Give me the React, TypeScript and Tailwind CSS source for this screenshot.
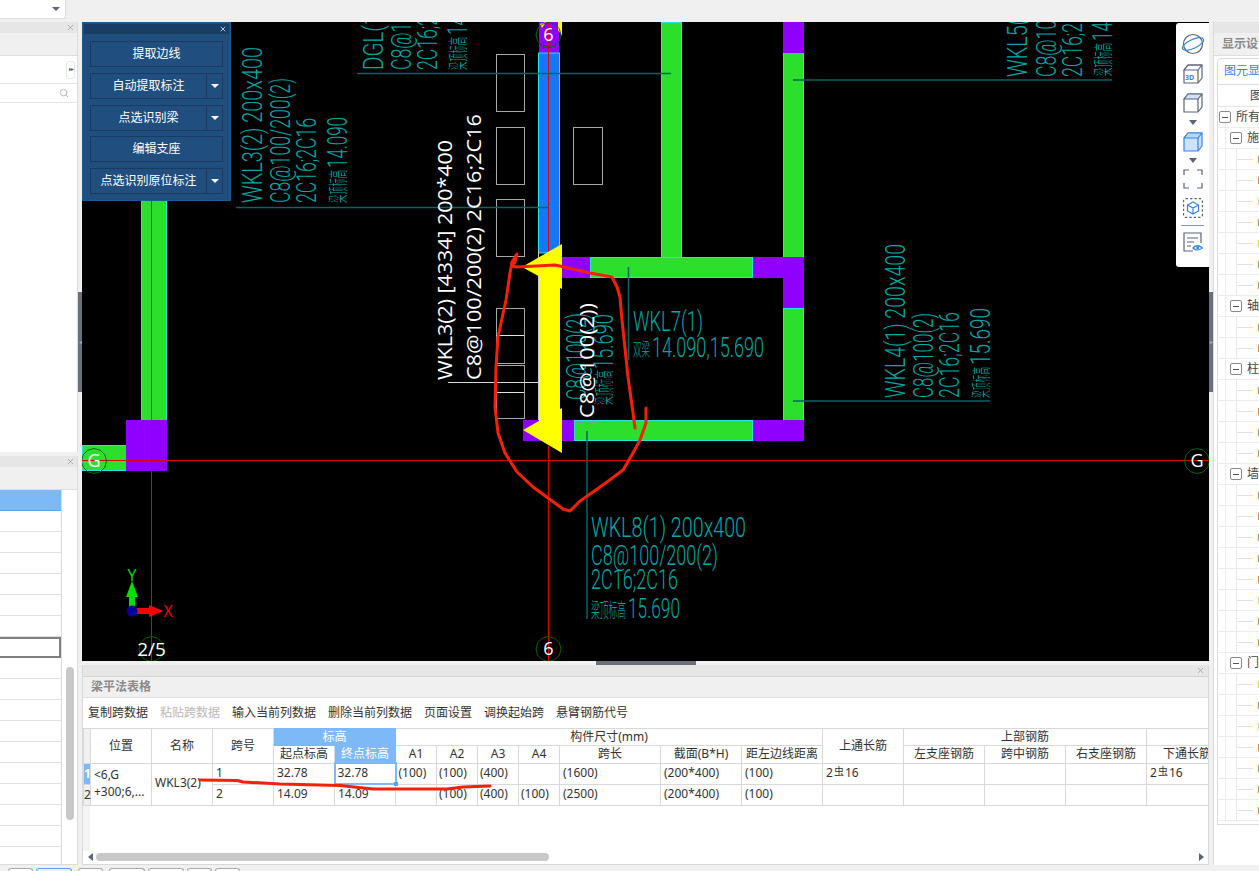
import { ReactNode } from "react";
import { X, Search } from "lucide-react";

const UI_FONT = '"Noto Sans", "Noto Sans CJK SC", sans-serif';
const CAD_FONT = 'Roboto, "Noto Sans CJK SC", sans-serif';
const LABEL_FONT = '"Open Sans", "Noto Sans CJK SC", sans-serif';
const TEAL = "#00a8a8";
const LEADER = "#046464";

function VText({ x, y, len, size = 28, fill = TEAL, children }: { x: number; y: number; len: number; size?: number; fill?: string; children: string }) {
  const label = fill !== TEAL;
  return (
    <text
      transform={`translate(${x},${y}) rotate(-90)`}
      fontSize={size}
      fontWeight={label ? 400 : 300}
      fill={fill}
      textLength={len}
      lengthAdjust="spacingAndGlyphs"
      fontFamily={label ? LABEL_FONT : CAD_FONT}
    >
      {children}
    </text>
  );
}

function HText({ x, y, len, size = 28, fill = TEAL, children }: { x: number; y: number; len: number; size?: number; fill?: string; children: string }) {
  return (
    <text x={x} y={y} fontSize={size} fontWeight={300} fill={fill} textLength={len} lengthAdjust="spacingAndGlyphs" fontFamily={CAD_FONT}>
      {children}
    </text>
  );
}

function Bubble({ x, y, label, size = 18 }: { x: number; y: number; label: string; size?: number }) {
  const points = Array.from({ length: 12 }, (_, i) => {
    const a = (i * Math.PI) / 6;
    return `${x + 12.5 * Math.cos(a)},${y + 12.5 * Math.sin(a)}`;
  }).join(" ");
  return (
    <g>
      <polygon points={points} fill="none" stroke="#006a00" strokeWidth={1} />
      <text x={x} y={y + size * 0.36} fontSize={size} fill="#fff" textAnchor="middle" fontFamily={LABEL_FONT}>
        {label}
      </text>
    </g>
  );
}

function Beam({ x, y, w, h }: { x: number; y: number; w: number; h: number }) {
  return <rect x={x + 0.5} y={y + 0.5} width={w - 1} height={h - 1} fill="#2ddf2d" stroke="#22e6e0" strokeWidth={1} />;
}

function CadCanvas() {
  const rects = [
    [496, 54, 28, 57],
    [496, 127, 28, 57],
    [496, 199, 28, 57],
    [573, 127, 29, 57],
    [496, 308, 28, 55],
    [496, 365, 28, 53],
  ];
  return (
    <svg className="block" width={1127} height={639} viewBox="82 22 1127 639">
      <rect x={82} y={22} width={1127} height={639} fill="#000" />

      {/* beams */}
      <Beam x={141} y={190} w={26} h={232} />
      <Beam x={82} y={445} w={46} h={26} />
      <rect x={126} y={420} width={41} height={51} fill="#8f00ff" />
      <Beam x={661} y={22} w={21} h={240} />
      <Beam x={590} y={257} w={163} h={21} />
      <Beam x={783} y={50} w={21} h={210} />
      <Beam x={783} y={308} w={21} h={114} />
      <Beam x={574} y={420} w={179} h={21} />
      <rect x={539} y={22} width={20} height={31} fill="#8f00ff" />
      <rect x={783} y={22} width={21} height={31} fill="#8f00ff" />
      <rect x={562} y={257} width={28} height={21} fill="#8f00ff" />
      <rect x={753} y={257} width={51} height={21} fill="#8f00ff" />
      <rect x={783} y={278} width={21} height={30} fill="#8f00ff" />
      <rect x={523} y={420} width={51} height={21} fill="#8f00ff" />
      <rect x={753} y={420} width={51} height={21} fill="#8f00ff" />
      <rect x={538.5} y={53} width={21} height={200} fill="#1478ff" stroke="#22e6e0" />
      <line x1={538.5} y1={250} x2={538.5} y2={420} stroke="#c8c8c8" />
      <line x1={559.5} y1={280} x2={559.5} y2={420} stroke="#c8e8e8" />

      {/* yellow selection arrow */}
      <polygon points="558,22 562,22 562,36 558,30" fill="#ffff00" />
      <polygon points="540,24 546,22 542,28" fill="#ffff00" />
      <rect x={539} y={262} width={20} height={165} fill="#ffff00" />
      <polygon points="522,267 562,244 562,289" fill="#ffff00" />
      <polygon points="523,430 562,408 562,453" fill="#ffff00" />

      {/* axis lines */}
      <line x1={82} y1={460.5} x2={1209} y2={460.5} stroke="#e00000" />
      <line x1={548.5} y1={22} x2={548.5} y2={251} stroke="#e00000" />
      <line x1={548.5} y1={446} x2={548.5} y2={661} stroke="#e00000" />
      <line x1={151.5} y1={190} x2={151.5} y2={661} stroke="#e00000" />

      {rects.map(([x, y, w, h]) => (
        <rect key={`${x}-${y}`} x={x + 0.5} y={y + 0.5} width={w} height={h} fill="none" stroke="#a8a8a8" />
      ))}
      <line x1={496} y1={335.5} x2={524} y2={335.5} stroke="#e0e0e0" />
      <line x1={496} y1={392.5} x2={524} y2={392.5} stroke="#e0e0e0" />
      <line x1={448} y1={382.5} x2={538} y2={382.5} stroke="#d8d8d8" />

      {/* leaders */}
      <g stroke={LEADER} strokeWidth={1.5}>
        <line x1={357} y1={73.5} x2={671} y2={73.5} />
        <line x1={236} y1={207.5} x2={549} y2={207.5} />
        <line x1={793} y1={80} x2={1112} y2={80} />
        <line x1={793} y1={401} x2={990} y2={401} />
        <line x1={628.5} y1={267} x2={628.5} y2={360} />
        <line x1={587} y1={431} x2={587} y2={619} />
      </g>

      {/* WKL3 */}
      <VText x={262} y={203} len={156}>WKL3(2) 200x400</VText>
      <VText x={290} y={203} len={125}>C8@100/200(2)</VText>
      <VText x={316} y={203} len={85}>2C16;2C16</VText>
      <VText x={346} y={203} len={33} size={20}>梁顶标高</VText>
      <VText x={347} y={168} len={51}>14.090</VText>

      {/* DGL */}
      <VText x={383} y={70} len={146}>DGL(1) 200x400</VText>
      <VText x={411} y={70} len={125}>C8@150/200(2)</VText>
      <VText x={437} y={70} len={85}>2C16;2C16</VText>
      <VText x={466} y={70} len={33} size={20}>梁顶标高</VText>
      <VText x={467} y={35} len={51}>14.090</VText>

      {/* WKL5 */}
      <VText x={1027} y={77} len={156}>WKL5(2) 200x400</VText>
      <VText x={1056} y={77} len={125}>C8@100/200(2)</VText>
      <VText x={1082} y={77} len={85}>2C16;2C16</VText>
      <VText x={1111} y={76} len={33} size={20}>梁顶标高</VText>
      <VText x={1112} y={41} len={51}>14.090</VText>

      {/* WKL4 */}
      <VText x={905} y={398} len={154}>WKL4(1) 200x400</VText>
      <VText x={933} y={398} len={85}>C8@100(2)</VText>
      <VText x={959} y={398} len={86}>2C16;2C16</VText>
      <VText x={989} y={398} len={31} size={20}>梁顶标高</VText>
      <VText x={990} y={365} len={57}>15.690</VText>

      {/* WKL6 behind the selection */}
      <VText x={586} y={400} len={87}>C8@100(2)</VText>
      <VText x={612} y={405} len={35} size={20}>梁顶标高</VText>
      <VText x={613} y={369} len={55}>15.690</VText>

      {/* WKL7 */}
      <HText x={633} y={331} len={70}>WKL7(1)</HText>
      <HText x={633} y={356} len={17} size={18}>双梁</HText>
      <HText x={652} y={357} len={112}>14.090,15.690</HText>

      {/* WKL8 */}
      <HText x={591} y={537} len={155}>WKL8(1) 200x400</HText>
      <HText x={591} y={565} len={127}>C8@100/200(2)</HText>
      <HText x={591} y={589} len={87}>2C16;2C16</HText>
      <HText x={591} y={618} len={35} size={20}>梁顶标高</HText>
      <HText x={628} y={618} len={52}>15.690</HText>

      {/* selected beam labels */}
      <VText x={452} y={380} len={240} size={20} fill="#fff">WKL3(2) [4334] 200*400</VText>
      <VText x={481} y={380} len={266} size={20} fill="#fff">C8@100/200(2) 2C16;2C16</VText>
      <VText x={594} y={418} len={115} size={20} fill="#fff">C8@100(2))</VText>
      <path d="M576 421 Q586 426 596 421" fill="none" stroke="#c86ad0" />

      <Bubble x={94} y={461} label="G" />
      <Bubble x={1197} y={461} label="G" />
      <Bubble x={548.5} y={35} label="6" />
      <Bubble x={548.5} y={649} label="6" />
      <Bubble x={151.5} y={649} label="2/5" size={19} />

      {/* origin gizmo */}
      <rect x={129} y={595} width={6} height={16} fill="#00e000" />
      <polygon points="132,581 138,597 126,597" fill="#00e000" />
      <rect x={132} y={608} width={18} height={6} fill="#ff0000" />
      <polygon points="163,611 149,605 149,617" fill="#ff0000" />
      <circle cx={132} cy={611} r={5.5} fill="#00009c" />
      <text x={132} y={581} fontSize={16} fill="#00e000" textAnchor="middle" fontFamily={LABEL_FONT}>Y</text>
      <text x={168} y={617} fontSize={16} fill="#ff0000" textAnchor="middle" fontFamily={LABEL_FONT}>X</text>
    </svg>
  );
}

function PanelButton({ label, menu }: { label: string; menu?: boolean }) {
  return (
    <div className="flex h-[26px] border border-[#1a3a5e] text-xs text-white">
      <div className="flex flex-1 items-center justify-center">{label}</div>
      {menu && (
        <div className="flex w-4 items-center justify-center border-l border-[#1a3a5e]">
          <span className="h-0 w-0 border-x-[4px] border-t-[4px] border-x-transparent border-t-white" />
        </div>
      )}
    </div>
  );
}

function BeamPanel() {
  return (
    <div className="absolute left-0 top-0 flex h-[179px] w-[149px] flex-col border border-[#1c5a96] bg-[#1f4e7f] p-px">
      <div className="flex h-[10px] items-center justify-end bg-[#1a3d63] pr-[2px]">
        <X size={8} strokeWidth={3} className="text-[#a9c6e4]" />
      </div>
      <div className="flex flex-col gap-[6px] px-[6px] pt-[7px]">
        <PanelButton label="提取边线" />
        <PanelButton label="自动提取标注" menu />
        <PanelButton label="点选识别梁" menu />
        <div className="-mt-px">
          <PanelButton label="编辑支座" />
        </div>
        <PanelButton label="点选识别原位标注" menu />
      </div>
    </div>
  );
}

const GRAY = "#5b6577";
const BLUE = "#2f86e8";

function Cube({ stroke = GRAY, top = "none", body = "none", children }: { stroke?: string; top?: string; body?: string; children?: ReactNode }) {
  return (
    <svg width={20} height={20} viewBox="0 0 20 20" fill="none" stroke={stroke} strokeWidth={1.2} strokeLinejoin="round">
      <path d="M1 6 L5 1 H19 V14 L15 19 H1 Z" fill={body} />
      <path d="M1 6 L5 1 H19 L15 6 Z" fill={top} />
      <path d="M15 6 V19" />
      {children}
    </svg>
  );
}

function DropMark() {
  return <span className="h-0 w-0 border-x-[4px] border-t-[5px] border-x-transparent border-t-[#5b6577]" />;
}

function ViewToolbar() {
  return (
    <div className="absolute right-0 top-[1px] flex h-[244px] w-[33px] flex-col items-center rounded-l-[3px] bg-white pt-[10px]">
      <svg width={24} height={22} viewBox="0 0 24 22" fill="none" strokeWidth={1.2}>
        <circle cx={12} cy={11} r={9.5} stroke={GRAY} />
        <ellipse cx={12} cy={11} rx={11.5} ry={4.5} stroke={BLUE} transform="rotate(-25 12 11)" />
      </svg>
      <div className="mt-[9px] h-5">
        <Cube>
          <text x={2} y={16} fontSize={7} fontWeight={700} fill={BLUE} stroke="none" fontFamily={UI_FONT}>3D</text>
        </Cube>
      </div>
      <div className="mt-[9px] h-5">
        <Cube top="#cfe2fb" />
      </div>
      <div className="mt-[7px] flex h-[5px]"><DropMark /></div>
      <div className="mt-[7px] h-5">
        <Cube stroke={BLUE} top="#b9d6fa" body="#cfe2fb" />
      </div>
      <div className="mt-[6px] flex h-[5px]"><DropMark /></div>
      <svg className="mt-[6px]" width={20} height={20} viewBox="0 0 20 20" fill="none" stroke={GRAY} strokeWidth={1.2}>
        <path d="M6 1 H1 V6 M14 1 H19 V6 M1 14 V19 H6 M19 14 V19 H14" />
      </svg>
      <svg className="mt-[9px]" width={20} height={20} viewBox="0 0 20 20" fill="none" strokeWidth={1.2}>
        <rect x={0.6} y={0.6} width={18.8} height={18.8} rx={2} stroke={GRAY} strokeDasharray="2.4 2" />
        <path d="M10 4 L15.5 7 V13 L10 16 L4.5 13 V7 Z M4.5 7 L10 10 L15.5 7 M10 10 V16" stroke={BLUE} />
      </svg>
      <div className="mt-[7px] h-px w-[23px] bg-[#8a93a3]" />
      <svg className="mt-[6px]" width={20} height={20} viewBox="0 0 20 20" fill="none" strokeWidth={1.2}>
        <path d="M10 19 H1 V1 H18 V11" stroke={GRAY} />
        <path d="M4 6 H15 M4 10 H11 M4 14 H8" stroke={GRAY} />
        <path d="M10 16 Q14 11.5 19.5 16 Q14 20 10 16 Z" stroke={BLUE} fill="#fff" />
        <circle cx={14.7} cy={15.9} r={1.4} fill={BLUE} />
      </svg>
    </div>
  );
}

function Th({ children, className = "", ...rest }: { children?: ReactNode; className?: string; colSpan?: number; rowSpan?: number }) {
  return (
    <th {...rest} className={`border border-[#d9d9d9] p-0 text-center font-normal ${className}`}>
      <div className="truncate">{children}</div>
    </th>
  );
}

function Td({ children, className = "", ...rest }: { children?: ReactNode; className?: string; rowSpan?: number }) {
  return (
    <td {...rest} className={`border border-[#d9d9d9] px-[3px] pb-[2px] pt-0 ${className}`}>
      {children}
    </td>
  );
}

const COLUMNS = [7, 61, 61, 61, 61, 61, 41, 41, 41, 41, 101, 81, 81, 81, 81, 81, 81, 81];

function Rebar() {
  return (
    <span>
      2<span className="relative top-[-2px] px-px text-[10px]">虫</span>16
    </span>
  );
}

function SpanTable() {
  return (
    <table className="shrink-0 table-fixed border-collapse text-xs text-[#333]" style={{ width: 1144 }}>
      <colgroup>
        {COLUMNS.map((w, i) => (
          <col key={i} style={{ width: w }} />
        ))}
      </colgroup>
      <thead>
        <tr className="h-[17px]">
          <Th rowSpan={2} className="bg-[#f0f0f0]" />
          <Th rowSpan={2}>位置</Th>
          <Th rowSpan={2}>名称</Th>
          <Th rowSpan={2}>跨号</Th>
          <th colSpan={2} className="border border-[#7db8f7] bg-[#7db8f7] p-0 text-center font-normal text-white">标高</th>
          <Th colSpan={7}>构件尺寸(mm)</Th>
          <Th rowSpan={2}>上通长筋</Th>
          <Th colSpan={3}>上部钢筋</Th>
          <Th />
        </tr>
        <tr className="h-[17px]">
          <Th>起点标高</Th>
          <th className="border border-[#7db8f7] bg-[#7db8f7] p-0 text-center font-normal text-white">终点标高</th>
          <Th>A1</Th>
          <Th>A2</Th>
          <Th>A3</Th>
          <Th>A4</Th>
          <Th>跨长</Th>
          <Th>截面(B*H)</Th>
          <Th>距左边线距离</Th>
          <Th>左支座钢筋</Th>
          <Th>跨中钢筋</Th>
          <Th>右支座钢筋</Th>
          <Th>下通长筋</Th>
        </tr>
      </thead>
      <tbody>
        <tr className="h-[21px]">
          <td className="border border-[#d9d9d9] bg-[#7db8f7] p-0 text-center font-bold text-white">1</td>
          <td rowSpan={2} className="border border-[#d9d9d9] px-[3px] pb-[2px] pt-0 leading-[17px]">
            <div>&lt;6,G</div>
            <div className="truncate">+300;6,...</div>
          </td>
          <Td rowSpan={2}>WKL3(2)</Td>
          <Td>1</Td>
          <Td>32.78</Td>
          <td className="relative border-2 border-[#7db8f7] px-[2px] pb-[2px] pt-0">
            32.78
            <span className="absolute -bottom-[3px] -right-[3px] h-[4px] w-[4px] bg-[#5aa2ee]" />
          </td>
          <td className="border border-[#d9d9d9] px-[2px] pb-[2px] pt-0">(100)</td>
          <td className="border border-[#d9d9d9] px-[2px] pb-[2px] pt-0">(100)</td>
          <td className="border border-[#d9d9d9] px-[2px] pb-[2px] pt-0">(400)</td>
          <Td />
          <Td>(1600)</Td>
          <Td>(200*400)</Td>
          <Td>(100)</Td>
          <Td><Rebar /></Td>
          <Td />
          <Td />
          <Td />
          <Td><Rebar /></Td>
        </tr>
        <tr className="h-[21px]">
          <td className="border border-[#d9d9d9] bg-[#f0f0f0] p-0 text-center">2</td>
          <Td>2</Td>
          <Td>14.09</Td>
          <Td>14.09</Td>
          <Td />
          <td className="border border-[#d9d9d9] px-[2px] pb-[2px] pt-0">(100)</td>
          <td className="border border-[#d9d9d9] px-[2px] pb-[2px] pt-0">(400)</td>
          <td className="border border-[#d9d9d9] px-[2px] pb-[2px] pt-0">(100)</td>
          <Td>(2500)</Td>
          <Td>(200*400)</Td>
          <Td>(100)</Td>
          <Td />
          <Td />
          <Td />
          <Td />
          <Td />
        </tr>
      </tbody>
    </table>
  );
}

function BottomPanel() {
  const actions = ["复制跨数据", "粘贴跨数据", "输入当前列数据", "删除当前列数据", "页面设置", "调换起始跨", "悬臂钢筋代号"];
  return (
    <div className="flex h-[200px] flex-col overflow-hidden border-x border-b border-[#d9d9d9] bg-white">
      <div className="flex h-[12px] shrink-0 items-center justify-end border-b border-[#d4d4d4] bg-[#e6e6e6] pr-[3px]">
        <X size={9} className="text-[#9a9a9a]" />
      </div>
      <div className="flex h-[21px] shrink-0 items-center border-b border-[#dedede] bg-[#f0f0f0] pl-[8px] text-xs font-bold text-[#8a8a8a]">梁平法表格</div>
      <div className="flex h-[30px] shrink-0 items-center gap-3 pl-[5px] text-xs text-[#333]">
        {actions.map((a) => (
          <span key={a} className={a === "粘贴跨数据" ? "text-[#b9b9b9]" : ""}>{a}</span>
        ))}
      </div>
      <SpanTable />
      <div className="h-[45px] w-[7px] shrink-0 bg-[#f4f4f4]" />
      <div className="flex h-[12px] shrink-0 items-center">
        <span className="ml-[5px] h-0 w-0 border-y-[4px] border-r-[5px] border-y-transparent border-r-[#5b6577]" />
        <div className="ml-[3px] h-[8px] w-[453px] rounded-full bg-[#c8c8c8]" />
        <span className="ml-auto mr-[4px] h-0 w-0 border-y-[4px] border-l-[5px] border-y-transparent border-l-[#5b6577]" />
      </div>
    </div>
  );
}

function LeftPanels() {
  const rows = Array.from({ length: 18 }, (_, i) => i);
  return (
    <div className="flex w-[78px] shrink-0 flex-col gap-[4px]">
      <div className="flex h-[430px] flex-col border-r border-[#dcdcdc] bg-white">
        <div className="flex h-[11px] shrink-0 items-center justify-end bg-[#e6e6e6] pr-[2px]">
          <X size={9} className="text-[#9a9a9a]" />
        </div>
        <div className="h-[23px] shrink-0 border-b border-[#dedede] bg-[#f0f0f0]" />
        <div className="flex h-[28px] shrink-0 items-center justify-end border-b border-[#e4e4e4] pr-[2px]">
          <div className="flex h-[18px] w-[9px] items-center justify-center rounded-[3px] border border-[#e8e8e8] text-[6px] tracking-[-1px] text-[#5b6577]">▸▸</div>
        </div>
        <div className="flex h-[19px] shrink-0 items-center justify-end border-b border-[#e4e4e4] pr-[8px]">
          <Search size={10} strokeWidth={2} className="text-[#b0b0b0]" />
        </div>
      </div>
      <div className="flex h-[409px] flex-col border-r border-b border-[#dcdcdc] bg-white">
        <div className="flex h-[11px] shrink-0 items-center justify-end bg-[#e6e6e6] pr-[2px]">
          <X size={9} className="text-[#9a9a9a]" />
        </div>
        <div className="h-[23px] shrink-0 border-b border-[#dedede] bg-[#f0f0f0]" />
        <div className="flex min-h-0 flex-1">
          <div className="w-[62px] shrink-0 overflow-hidden border-r border-[#dcdcdc]">
            {rows.map((i) => (
              <div
                key={i}
                className={`h-[21px] ${i === 0 ? "border-b border-[#5aa2ee] bg-[#7db8f7]" : i === 7 ? "border-2 border-l-0 border-[#808080]" : "border-b border-[#e0e0e0]"}`}
              />
            ))}
          </div>
          <div className="ml-[4px] mt-[177px] h-[153px] w-[8px] rounded-full bg-[#c8c8c8]" />
        </div>
      </div>
    </div>
  );
}

type TreeRow = { group?: string; depth?: number; mark?: string };

function buildTree(): TreeRow[] {
  const items = (n: number, yellowAt: number[] = []) =>
    Array.from({ length: n }, (_, i) => ({ mark: yellowAt.includes(i) ? "#f4d35e" : "#e08a2c" }));
  return [
    { group: "所有", depth: 0 },
    { group: "施", depth: 1 },
    ...items(7, [2, 4]),
    { group: "轴", depth: 1 },
    ...items(2),
    { group: "柱", depth: 1 },
    ...items(4),
    { group: "墙", depth: 1 },
    ...items(8, [5]),
    { group: "门", depth: 1 },
    ...items(7, [0, 2]),
  ];
}

function TreeSquare() {
  return (
    <span className="flex h-[12px] w-[12px] shrink-0 items-center justify-center rounded-[2px] border border-[#8a8a8a] bg-white">
      <span className="h-px w-[6px] bg-[#555]" />
    </span>
  );
}

function RightPanel() {
  return (
    <div className="flex w-[46px] shrink-0 flex-col overflow-hidden border-l border-[#dcdcdc] bg-white">
      <div className="h-[11px] shrink-0 bg-[#e6e6e6]" />
      <div className="flex h-[23px] shrink-0 items-center whitespace-nowrap border-b border-[#dedede] bg-[#f0f0f0] pl-[8px] text-xs font-bold text-[#8a8a8a]">显示设置</div>
      <div className="h-[28px] shrink-0 pl-[3px] pt-[2px]">
        <div className="h-[27px] w-[60px] whitespace-nowrap rounded-t-[5px] border border-b-0 border-[#dcdcdc] pl-[6px] pt-[4px] text-xs text-[#2f86e8]">图元显示</div>
      </div>
      <div className="ml-[3px] h-[741px] w-[60px] shrink-0 overflow-hidden border border-[#dcdcdc] text-xs text-[#444]">
        <div className="flex h-[22px] items-center border-b border-[#e4e4e4] pl-[32px]">图层</div>
        {buildTree().map((row, i) => (
          <div key={i} className="relative flex h-[21px] items-center whitespace-nowrap border-b border-[#ececec]">
            <span className="absolute bottom-0 left-[7px] top-0 w-px bg-[#ececec]" />
            {row.group ? (
              <div className={`relative flex items-center gap-[5px] ${row.depth === 0 ? "pl-[1px]" : "pl-[12px]"}`}>
                <TreeSquare />
                <span>{row.group}</span>
              </div>
            ) : (
              <>
                <span className="absolute bottom-0 left-[18px] top-0 w-px bg-[#e8e8e8]" />
                <span className="ml-[19px] h-px w-[16px] bg-[#e0e0e0]" />
                <span className="ml-[5px] h-[7px] w-[2px]" style={{ backgroundColor: row.mark }} />
              </>
            )}
          </div>
        ))}
      </div>
    </div>
  );
}

function SideGrip({ arrow }: { arrow: string }) {
  return (
    <div className="flex w-[4px] shrink-0 pt-[270px]">
      <div className="flex h-[100px] w-[4px] items-center justify-center bg-[#68707c] text-[6px] leading-none text-[#aab0b8]">{arrow}</div>
    </div>
  );
}

const SHEET_TABS = [
  { width: 25, gap: 3 },
  { width: 36, gap: 6 },
  { width: 25, gap: 6 },
  { width: 36, gap: 3 },
  { width: 36, gap: 3 },
  { width: 25, gap: 3 },
  { width: 25, gap: 0 },
];

export default function App() {
  return (
    <div className="relative flex h-[871px] w-[1259px] flex-col overflow-hidden bg-[#f0f0f0]" style={{ fontFamily: UI_FONT }}>
      <div className="h-[22px] shrink-0">
        <div className="flex h-[19px] w-[66px] items-center justify-end rounded-br-[3px] border-b border-r border-[#dcdcdc] bg-white pr-[5px]">
          <span className="h-0 w-0 border-x-[4px] border-t-[4px] border-x-transparent border-t-[#5b6577]" />
        </div>
      </div>
      <div className="flex h-[843px] shrink-0">
        <LeftPanels />
        <SideGrip arrow="◂" />
        <div className="flex w-[1127px] shrink-0 flex-col">
          <div className="relative h-[639px] shrink-0">
            <CadCanvas />
            <BeamPanel />
            <ViewToolbar />
          </div>
          <div className="flex h-[4px] shrink-0 justify-center pr-[1px]">
            <div className="ml-[1px] h-[4px] w-[100px] bg-[#68707c]" />
          </div>
          <BottomPanel />
        </div>
        <SideGrip arrow="▸" />
        <RightPanel />
      </div>
      <div className="flex h-[6px] shrink-0 pl-[8px] pt-[3px]">
        {SHEET_TABS.map((tab, i) => (
          <div
            key={i}
            style={{ width: tab.width, marginRight: tab.gap }}
            className={`rounded-t-[4px] border border-b-0 ${i === 1 ? "border-[#5aa2ee] bg-[#eaf3fd]" : "border-[#a8a8a8] bg-white"}`}
          />
        ))}
      </div>

      {/* hand-drawn red markup over the screenshot */}
      <svg className="pointer-events-none absolute left-0 top-0" width={1259} height={871} fill="none" stroke="#f5200a" strokeLinejoin="round" strokeLinecap="round">
        <path
          strokeWidth={3}
          d="M646 408 L646 423 L640 440 L633 453 L623 470 L607 482 L593 492 L580 501 L570 511 L563 509 L548 498 L533 487 L517 472 L505 453 L498 433 L495 407 L496 367 L498 337 L506 300 L510 273 L512 262 L517 254 L515 262 L512 266 L517 267 L555 265 L590 273 L612 277 L617 287 L620 297 L622 320 L628 377 L633 413 L635 428"
        />
        <path strokeWidth={3} d="M200 780 L237 780.5 L243 782 L280 784 L340 785.5 L373 789 L447 789 L463 787 L490 786" />
      </svg>
    </div>
  );
}
